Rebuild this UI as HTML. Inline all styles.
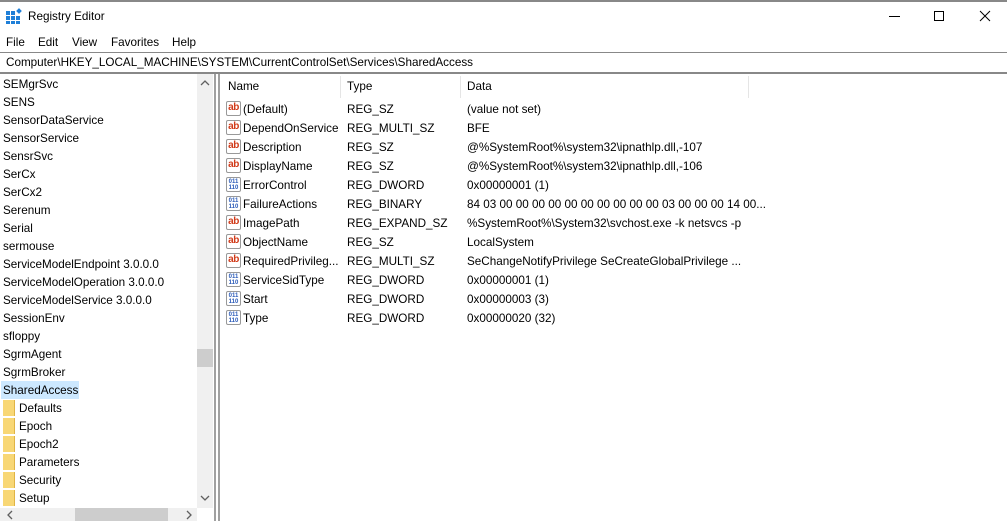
<!DOCTYPE html>
<html><head><style>
*{margin:0;padding:0;box-sizing:border-box}
body{width:1007px;height:521px;overflow:hidden;background:#fff;font-family:"Liberation Sans",sans-serif;font-size:11.7px;color:#000;position:relative}
.a{position:absolute;white-space:nowrap}
.ico{position:absolute;width:15px;height:15px}
.ab{border:1px solid #999;border-radius:2px;background:#fff;color:#d13b1a;font-weight:bold;font-size:10px;line-height:12px;text-align:center;letter-spacing:-0.5px}
.bn{border:1px solid #999;border-radius:2px;background:#fff;color:#2a5ab8;font-weight:bold;font-size:6px;line-height:6px;text-align:center;padding-top:1px}
.fold{position:absolute;left:3px;width:12px;height:16px;background:#f8d775;border-right:1px solid #e0b445}
</style></head><body>
<div class="a" style="left:0;top:0;width:1007px;height:2px;background:#888"></div>
<svg class="a" style="left:6px;top:8px" width="16" height="16"><g fill="#1f7fd8"><rect x="0" y="3" width="4" height="4"/><rect x="5" y="3" width="4" height="4"/><rect x="0" y="8" width="4" height="4"/><rect x="5" y="8" width="4" height="4"/><rect x="10" y="8" width="4" height="4"/><rect x="0" y="13" width="4" height="3"/><rect x="5" y="13" width="4" height="3"/><rect x="10" y="13" width="4" height="3"/><rect x="11" y="1" width="4" height="4" transform="rotate(45 13 3)"/></g></svg>
<div class="a" style="left:28px;top:10px">Registry Editor</div>
<div class="a" style="left:889px;top:16px;width:11px;height:1px;background:#000"></div>
<div class="a" style="left:934px;top:11px;width:10px;height:10px;border:1px solid #000"></div>
<svg class="a" style="left:979px;top:10px" width="12" height="12"><path d="M1 1L11 11M11 1L1 11" stroke="#000" stroke-width="1"/></svg>
<div class="a" style="left:6px;top:36px">File</div>
<div class="a" style="left:38px;top:36px">Edit</div>
<div class="a" style="left:72px;top:36px">View</div>
<div class="a" style="left:111px;top:36px">Favorites</div>
<div class="a" style="left:172px;top:36px">Help</div>
<div class="a" style="left:0;top:52px;width:1007px;height:1px;background:#888"></div>
<div class="a" style="left:6px;top:56px">Computer\HKEY_LOCAL_MACHINE\SYSTEM\CurrentControlSet\Services\SharedAccess</div>
<div class="a" style="left:0;top:72px;width:1007px;height:2px;background:#888"></div>
<div class="a" style="left:197px;top:74px;width:16px;height:434px;background:#f0f0f0"></div>
<svg class="a" style="left:200px;top:79px" width="10" height="8"><path d="M1 6L5 2L9 6" stroke="#606060" fill="none" stroke-width="1.3"/></svg>
<div class="a" style="left:197px;top:349px;width:16px;height:18px;background:#cdcdcd"></div>
<svg class="a" style="left:200px;top:494px" width="10" height="8"><path d="M1 2L5 6L9 2" stroke="#606060" fill="none" stroke-width="1.3"/></svg>
<div class="a" style="left:0;top:508px;width:197px;height:13px;background:#f0f0f0"></div>
<div class="a" style="left:75px;top:508px;width:93px;height:13px;background:#cdcdcd"></div>
<svg class="a" style="left:6px;top:510px" width="8" height="10"><path d="M6 1L2 5L6 9" stroke="#606060" fill="none" stroke-width="1.3"/></svg>
<svg class="a" style="left:185px;top:510px" width="8" height="10"><path d="M2 1L6 5L2 9" stroke="#606060" fill="none" stroke-width="1.3"/></svg>
<div class="a" style="left:214px;top:74px;width:2px;height:447px;background:#a0a0a0"></div>
<div class="a" style="left:218px;top:74px;width:2px;height:447px;background:#a0a0a0"></div>
<div class="a" style="left:1px;top:381px;width:78px;height:18px;background:#cce8ff"></div>
<div style="position:absolute;left:3px;top:76px;line-height:18px">
SEMgrSvc<br>SENS<br>SensorDataService<br>SensorService<br>SensrSvc<br>SerCx<br>SerCx2<br>Serenum<br>Serial<br>sermouse<br>ServiceModelEndpoint 3.0.0.0<br>ServiceModelOperation 3.0.0.0<br>ServiceModelService 3.0.0.0<br>SessionEnv<br>sfloppy<br>SgrmAgent<br>SgrmBroker<br>SharedAccess</div>
<div class="fold" style="top:400px"></div><div class="fold" style="top:418px"></div><div class="fold" style="top:436px"></div><div class="fold" style="top:454px"></div><div class="fold" style="top:472px"></div><div class="fold" style="top:490px"></div>
<div style="position:absolute;left:19px;top:400px;line-height:18px">Defaults<br>Epoch<br>Epoch2<br>Parameters<br>Security<br>Setup</div>
<div class="a" style="left:228px;top:80px">Name</div>
<div class="a" style="left:347px;top:80px">Type</div>
<div class="a" style="left:467px;top:80px">Data</div>
<div class="a" style="left:340px;top:76px;width:1px;height:22px;background:#e5e5e5"></div>
<div class="a" style="left:460px;top:76px;width:1px;height:22px;background:#e5e5e5"></div>
<div class="a" style="left:748px;top:76px;width:1px;height:22px;background:#e5e5e5"></div>
<div class="ico ab" style="left:226px;top:101px">ab</div>
<div class="ico ab" style="left:226px;top:120px">ab</div>
<div class="ico ab" style="left:226px;top:139px">ab</div>
<div class="ico ab" style="left:226px;top:158px">ab</div>
<div class="ico bn" style="left:226px;top:177px">011<br>110</div>
<div class="ico bn" style="left:226px;top:196px">011<br>110</div>
<div class="ico ab" style="left:226px;top:215px">ab</div>
<div class="ico ab" style="left:226px;top:234px">ab</div>
<div class="ico ab" style="left:226px;top:253px">ab</div>
<div class="ico bn" style="left:226px;top:272px">011<br>110</div>
<div class="ico bn" style="left:226px;top:291px">011<br>110</div>
<div class="ico bn" style="left:226px;top:310px">011<br>110</div>
<div style="position:absolute;left:243px;top:100px;line-height:19px">(Default)<br>DependOnService<br>Description<br>DisplayName<br>ErrorControl<br>FailureActions<br>ImagePath<br>ObjectName<br>RequiredPrivileg...<br>ServiceSidType<br>Start<br>Type</div>
<div style="position:absolute;left:347px;top:100px;line-height:19px">REG_SZ<br>REG_MULTI_SZ<br>REG_SZ<br>REG_SZ<br>REG_DWORD<br>REG_BINARY<br>REG_EXPAND_SZ<br>REG_SZ<br>REG_MULTI_SZ<br>REG_DWORD<br>REG_DWORD<br>REG_DWORD</div>
<div style="position:absolute;left:467px;top:100px;line-height:19px;white-space:nowrap">(value not set)<br>BFE<br>@%SystemRoot%\system32\ipnathlp.dll,-107<br>@%SystemRoot%\system32\ipnathlp.dll,-106<br>0x00000001 (1)<br>84 03 00 00 00 00 00 00 00 00 00 00 03 00 00 00 14 00...<br>%SystemRoot%\System32\svchost.exe -k netsvcs -p<br>LocalSystem<br>SeChangeNotifyPrivilege SeCreateGlobalPrivilege ...<br>0x00000001 (1)<br>0x00000003 (3)<br>0x00000020 (32)</div>
</body></html>
